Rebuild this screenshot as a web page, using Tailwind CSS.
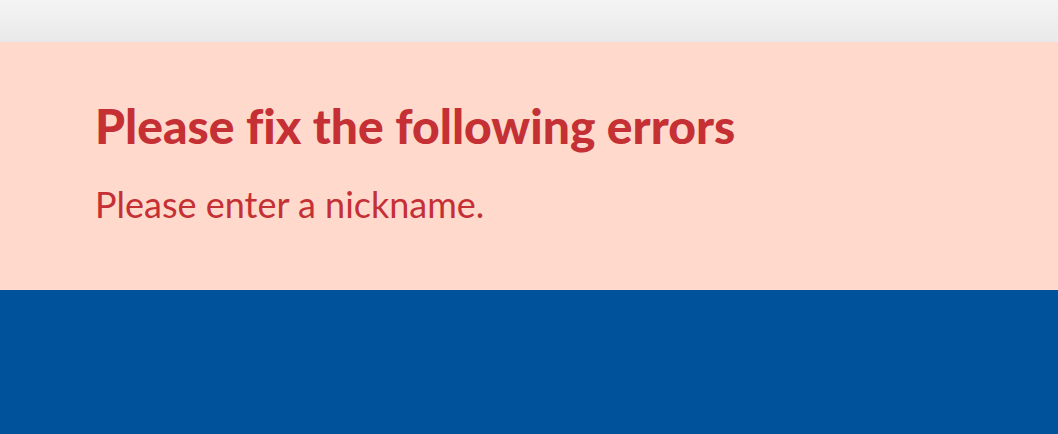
<!DOCTYPE html>
<html lang="en">
<head>
<meta charset="utf-8">
<meta name="viewport" content="width=device-width, initial-scale=1">
<title>Form errors</title>
<script src="https://cdn.jsdelivr.net/npm/@tailwindcss/browser@4"></script>
</head>
<body class="flex min-h-screen flex-col bg-[#00529b] font-['Lato',sans-serif]">
<header class="h-[42px] bg-linear-to-b from-[#f4f4f4] to-[#e9e9e9]"></header>
<section role="alert" class="bg-[#ffdacc] px-[95px] pt-14 pb-16 text-[#c53035]">
<h1 class="text-[48px] leading-[56px] font-black [font-variant-ligatures:none]">Please fix the following errors</h1>
<p class="mt-7 text-[36px] leading-[44px]">Please enter a nickname.</p>
</section>
<main class="flex-1"></main>
</body>
</html>
